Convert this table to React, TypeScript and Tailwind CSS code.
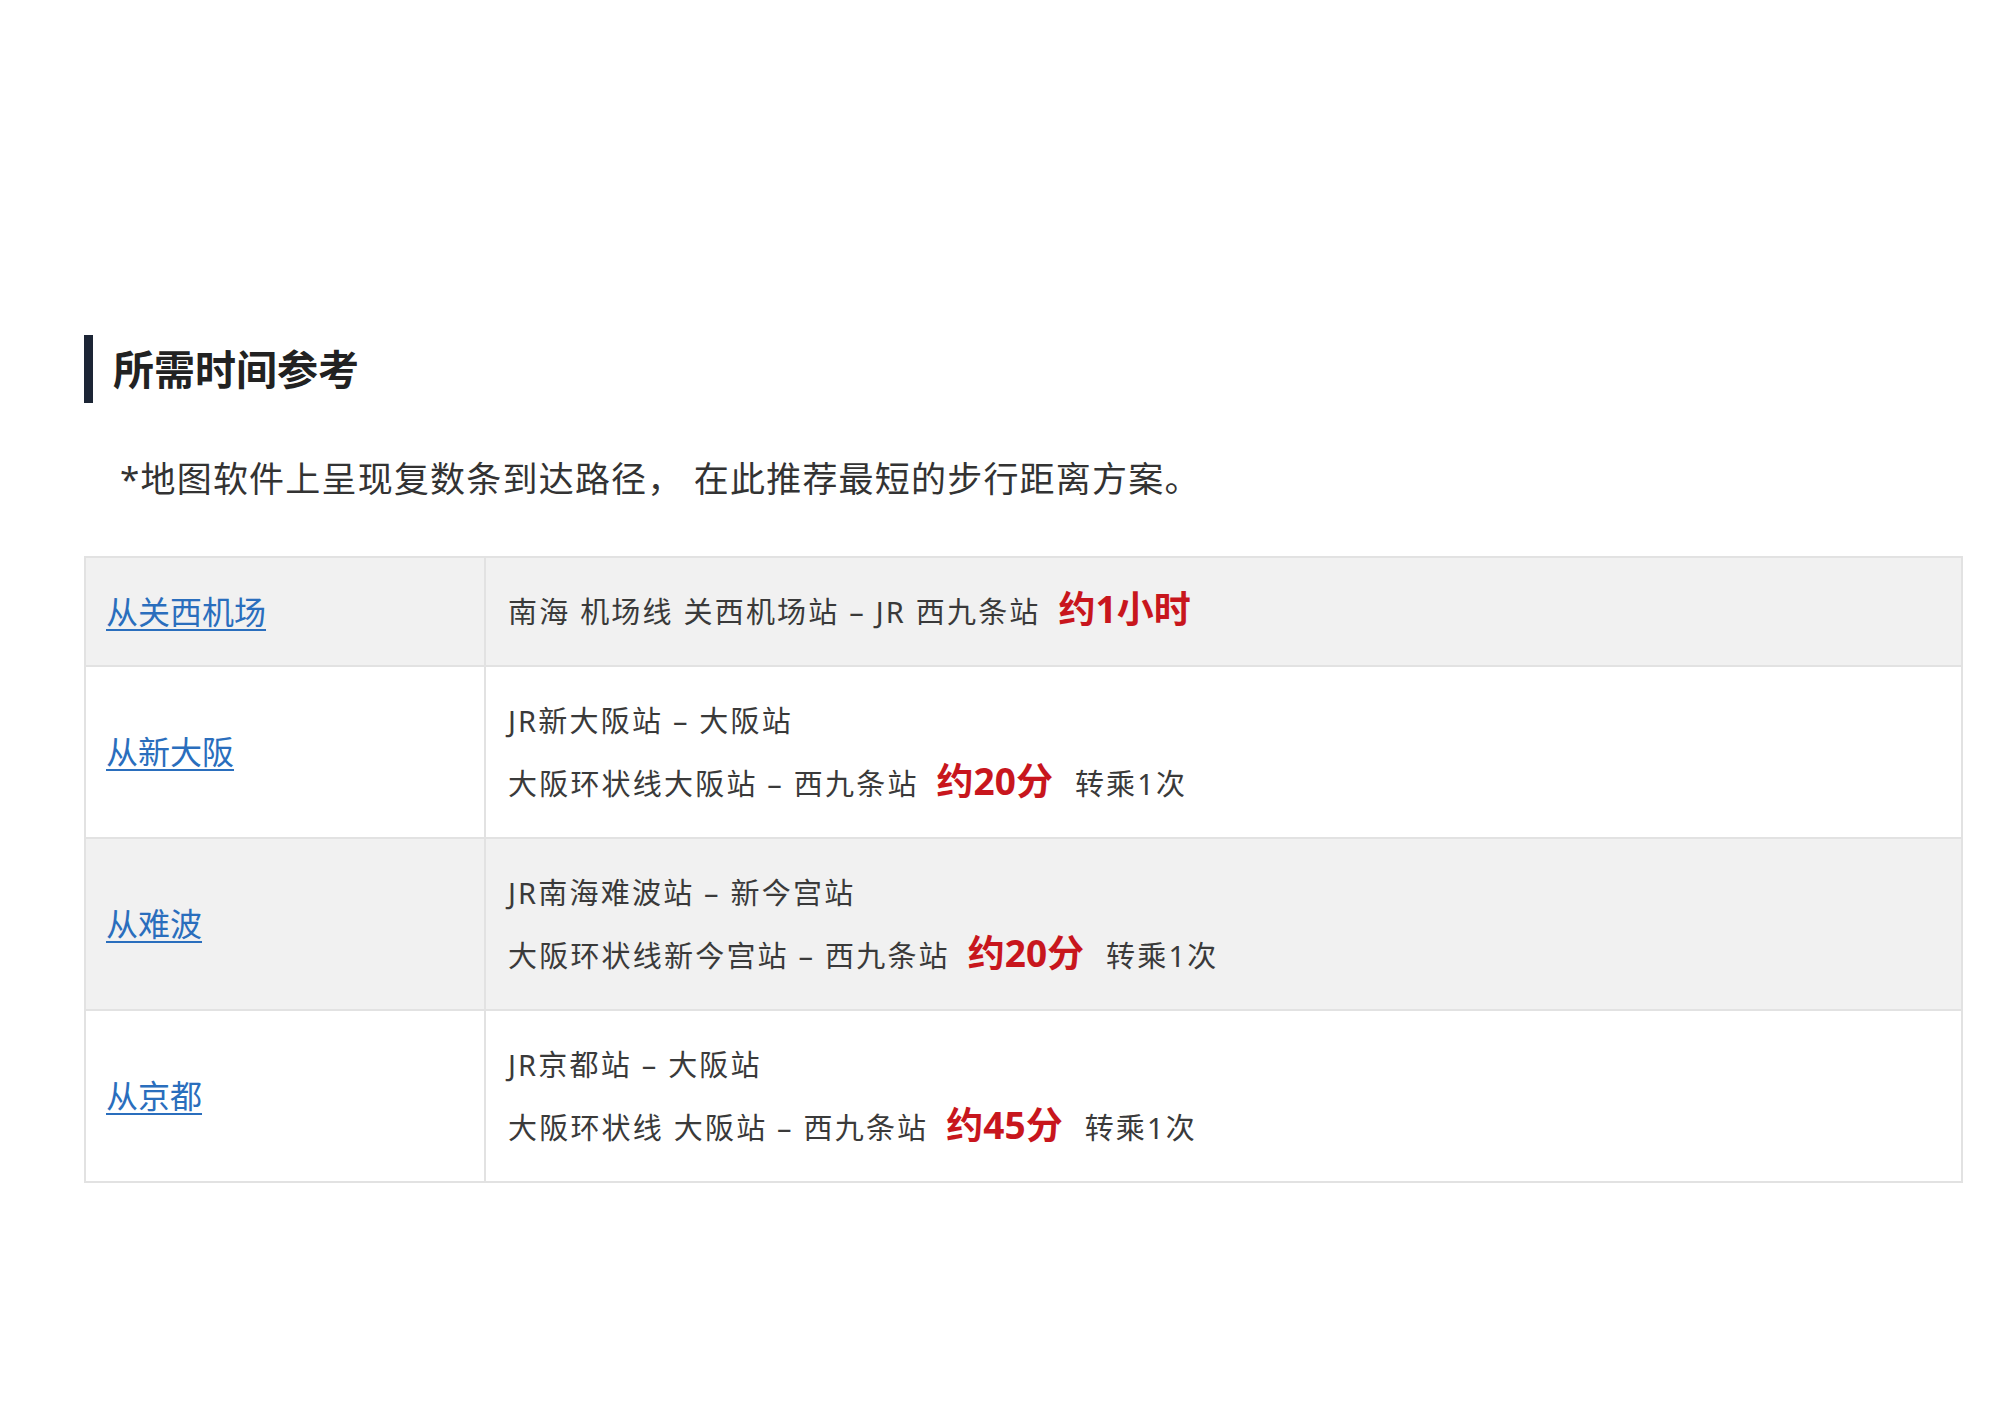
import React from 'react';

interface RouteRow {
    from: string;
    lines: { text: string; time?: string; transfer?: string }[];
}

const rows: RouteRow[] = [
    {
        from: '从关西机场',
        lines: [{ text: '南海 机场线 关西机场站 – JR 西九条站', time: '约1小时' }]
    },
    {
        from: '从新大阪',
        lines: [
            { text: 'JR新大阪站 – 大阪站' },
            { text: '大阪环状线大阪站 – 西九条站', time: '约20分', transfer: '转乘1次' }
        ]
    },
    {
        from: '从难波',
        lines: [
            { text: 'JR南海难波站 – 新今宫站' },
            { text: '大阪环状线新今宫站 – 西九条站', time: '约20分', transfer: '转乘1次' }
        ]
    },
    {
        from: '从京都',
        lines: [
            { text: 'JR京都站 – 大阪站' },
            { text: '大阪环状线 大阪站 – 西九条站', time: '约45分', transfer: '转乘1次' }
        ]
    }
];

const App = () => {
    return (
        <div className="min-h-[1413px] bg-white pt-[335px] pl-[84px] pr-[37px] font-['Noto_Sans','Noto_Sans_CJK_SC',sans-serif] text-[#333333]">
            {/* Section title */}
            <h2 className="flex items-center h-[68px] border-l-[9px] border-[#1c2535] pl-[20px] text-[41px] font-bold text-[#222222] leading-none">
                所需时间参考
            </h2>

            <p className="mt-[51px] pl-[36px] text-[35px] leading-[50px] tracking-[1.2px] text-[#333333]">
                *地图软件上呈现复数条到达路径， 在此推荐最短的步行距离方案。
            </p>

            <table className="mt-[52px] w-full border-collapse border-2 border-[#e2e2e2]">
                <tbody>
                    {rows.map((row, i) => (
                        <tr key={row.from} className={i % 2 === 0 ? 'bg-[#f1f1f1]' : 'bg-white'}>
                            <td className="w-[400px] border-2 border-[#e2e2e2] pl-[20px] align-middle">
                                <a href="#" className="text-[32px] text-[#2a6ebd] underline underline-offset-[5px] decoration-2">
                                    {row.from}
                                </a>
                            </td>
                            <td className="border-2 border-[#e2e2e2] pl-[22px] py-[22px] text-[29px] tracking-[2.2px] text-[#3a3a3a]">
                                {row.lines.map((line) => (
                                    <div key={line.text} className="flex items-baseline h-[63px] leading-[63px]">
                                        <span>{line.text}</span>
                                        {line.time && (
                                            <span className="ml-[18px] text-[37px] font-bold leading-none tracking-normal text-[#c8161d]">
                                                {line.time}
                                            </span>
                                        )}
                                        {line.transfer && (
                                            <span className="ml-[22px]">{line.transfer}</span>
                                        )}
                                    </div>
                                ))}
                            </td>
                        </tr>
                    ))}
                </tbody>
            </table>
        </div>
    );
};

export default App;
